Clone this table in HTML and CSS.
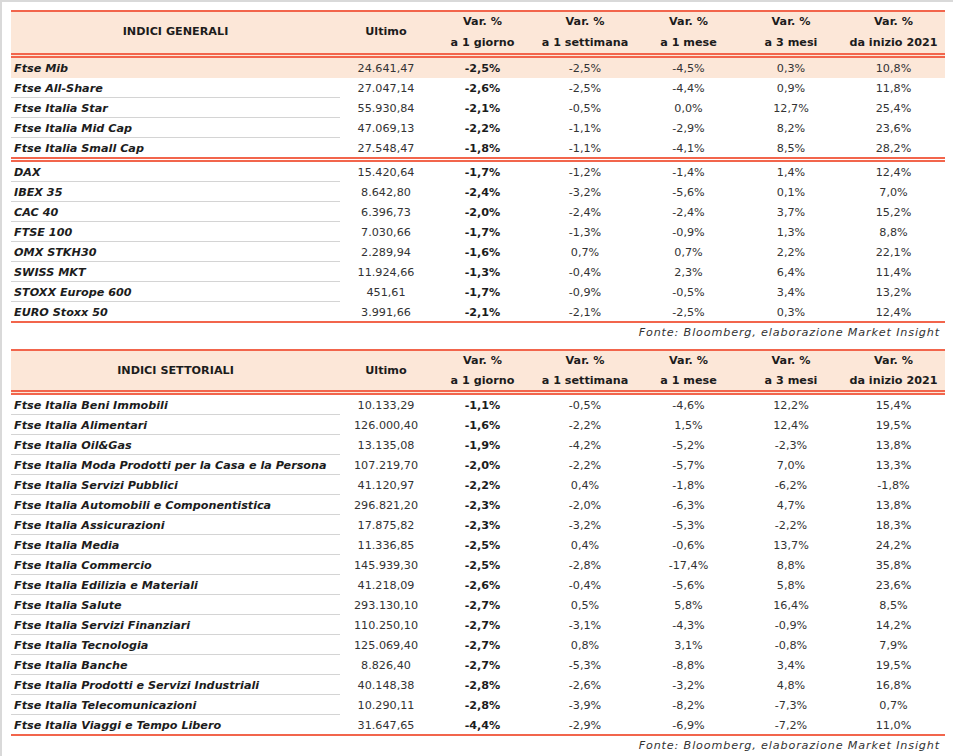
FILE: index.html
```html
<!DOCTYPE html>
<html lang="it">
<head>
<meta charset="utf-8">
<title>Indici</title>
<link rel="stylesheet" href="styles.css">
</head>
<body>
<div class="frame">
  <table class="tbl">
    <colgroup>
      <col class="c1"><col class="c2"><col class="c3"><col class="c4"><col class="c5"><col class="c6"><col class="c7">
    </colgroup>
    <thead>
      <tr>
        <th>INDICI GENERALI</th>
        <th>Ultimo</th>
        <th>Var. %<br>a 1 giorno</th>
        <th>Var. %<br>a 1 settimana</th>
        <th>Var. %<br>a 1 mese</th>
        <th>Var. %<br>a 3 mesi</th>
        <th>Var. %<br>da inizio 2021</th>
      </tr>
    </thead>
    <tbody>
      <tr class="hl nosep"><td class="name">Ftse Mib</td><td>24.641,47</td><td class="b">-2,5%</td><td>-2,5%</td><td>-4,5%</td><td>0,3%</td><td>10,8%</td></tr>
      <tr><td class="name">Ftse All-Share</td><td>27.047,14</td><td class="b">-2,6%</td><td>-2,5%</td><td>-4,4%</td><td>0,9%</td><td>11,8%</td></tr>
      <tr><td class="name">Ftse Italia Star</td><td>55.930,84</td><td class="b">-2,1%</td><td>-0,5%</td><td>0,0%</td><td>12,7%</td><td>25,4%</td></tr>
      <tr><td class="name">Ftse Italia Mid Cap</td><td>47.069,13</td><td class="b">-2,2%</td><td>-1,1%</td><td>-2,9%</td><td>8,2%</td><td>23,6%</td></tr>
      <tr class="dbl"><td class="name">Ftse Italia Small Cap</td><td>27.548,47</td><td class="b">-1,8%</td><td>-1,1%</td><td>-4,1%</td><td>8,5%</td><td>28,2%</td></tr>
      <tr><td class="name">DAX</td><td>15.420,64</td><td class="b">-1,7%</td><td>-1,2%</td><td>-1,4%</td><td>1,4%</td><td>12,4%</td></tr>
      <tr><td class="name">IBEX 35</td><td>8.642,80</td><td class="b">-2,4%</td><td>-3,2%</td><td>-5,6%</td><td>0,1%</td><td>7,0%</td></tr>
      <tr><td class="name">CAC 40</td><td>6.396,73</td><td class="b">-2,0%</td><td>-2,4%</td><td>-2,4%</td><td>3,7%</td><td>15,2%</td></tr>
      <tr><td class="name">FTSE 100</td><td>7.030,66</td><td class="b">-1,7%</td><td>-1,3%</td><td>-0,9%</td><td>1,3%</td><td>8,8%</td></tr>
      <tr><td class="name">OMX STKH30</td><td>2.289,94</td><td class="b">-1,6%</td><td>0,7%</td><td>0,7%</td><td>2,2%</td><td>22,1%</td></tr>
      <tr><td class="name">SWISS MKT</td><td>11.924,66</td><td class="b">-1,3%</td><td>-0,4%</td><td>2,3%</td><td>6,4%</td><td>11,4%</td></tr>
      <tr><td class="name">STOXX Europe 600</td><td>451,61</td><td class="b">-1,7%</td><td>-0,9%</td><td>-0,5%</td><td>3,4%</td><td>13,2%</td></tr>
      <tr class="last"><td class="name">EURO Stoxx 50</td><td>3.991,66</td><td class="b">-2,1%</td><td>-2,1%</td><td>-2,5%</td><td>0,3%</td><td>12,4%</td></tr>
    </tbody>
  </table>
  <p class="source">Fonte: Bloomberg, elaborazione Market Insight</p>

  <table class="tbl tbl-compact">
    <colgroup>
      <col class="c1"><col class="c2"><col class="c3"><col class="c4"><col class="c5"><col class="c6"><col class="c7">
    </colgroup>
    <thead>
      <tr>
        <th>INDICI SETTORIALI</th>
        <th>Ultimo</th>
        <th>Var. %<br>a 1 giorno</th>
        <th>Var. %<br>a 1 settimana</th>
        <th>Var. %<br>a 1 mese</th>
        <th>Var. %<br>a 3 mesi</th>
        <th>Var. %<br>da inizio 2021</th>
      </tr>
    </thead>
    <tbody>
      <tr><td class="name">Ftse Italia Beni Immobili</td><td>10.133,29</td><td class="b">-1,1%</td><td>-0,5%</td><td>-4,6%</td><td>12,2%</td><td>15,4%</td></tr>
      <tr><td class="name">Ftse Italia Alimentari</td><td>126.000,40</td><td class="b">-1,6%</td><td>-2,2%</td><td>1,5%</td><td>12,4%</td><td>19,5%</td></tr>
      <tr><td class="name">Ftse Italia Oil&amp;Gas</td><td>13.135,08</td><td class="b">-1,9%</td><td>-4,2%</td><td>-5,2%</td><td>-2,3%</td><td>13,8%</td></tr>
      <tr><td class="name">Ftse Italia Moda Prodotti per la Casa e la Persona</td><td>107.219,70</td><td class="b">-2,0%</td><td>-2,2%</td><td>-5,7%</td><td>7,0%</td><td>13,3%</td></tr>
      <tr><td class="name">Ftse Italia Servizi Pubblici</td><td>41.120,97</td><td class="b">-2,2%</td><td>0,4%</td><td>-1,8%</td><td>-6,2%</td><td>-1,8%</td></tr>
      <tr><td class="name">Ftse Italia Automobili e Componentistica</td><td>296.821,20</td><td class="b">-2,3%</td><td>-2,0%</td><td>-6,3%</td><td>4,7%</td><td>13,8%</td></tr>
      <tr><td class="name">Ftse Italia Assicurazioni</td><td>17.875,82</td><td class="b">-2,3%</td><td>-3,2%</td><td>-5,3%</td><td>-2,2%</td><td>18,3%</td></tr>
      <tr><td class="name">Ftse Italia Media</td><td>11.336,85</td><td class="b">-2,5%</td><td>0,4%</td><td>-0,6%</td><td>13,7%</td><td>24,2%</td></tr>
      <tr><td class="name">Ftse Italia Commercio</td><td>145.939,30</td><td class="b">-2,5%</td><td>-2,8%</td><td>-17,4%</td><td>8,8%</td><td>35,8%</td></tr>
      <tr><td class="name">Ftse Italia Edilizia e Materiali</td><td>41.218,09</td><td class="b">-2,6%</td><td>-0,4%</td><td>-5,6%</td><td>5,8%</td><td>23,6%</td></tr>
      <tr><td class="name">Ftse Italia Salute</td><td>293.130,10</td><td class="b">-2,7%</td><td>0,5%</td><td>5,8%</td><td>16,4%</td><td>8,5%</td></tr>
      <tr><td class="name">Ftse Italia Servizi Finanziari</td><td>110.250,10</td><td class="b">-2,7%</td><td>-3,1%</td><td>-4,3%</td><td>-0,9%</td><td>14,2%</td></tr>
      <tr><td class="name">Ftse Italia Tecnologia</td><td>125.069,40</td><td class="b">-2,7%</td><td>0,8%</td><td>3,1%</td><td>-0,8%</td><td>7,9%</td></tr>
      <tr><td class="name">Ftse Italia Banche</td><td>8.826,40</td><td class="b">-2,7%</td><td>-5,3%</td><td>-8,8%</td><td>3,4%</td><td>19,5%</td></tr>
      <tr><td class="name">Ftse Italia Prodotti e Servizi Industriali</td><td>40.148,38</td><td class="b">-2,8%</td><td>-2,6%</td><td>-3,2%</td><td>4,8%</td><td>16,8%</td></tr>
      <tr><td class="name">Ftse Italia Telecomunicazioni</td><td>10.290,11</td><td class="b">-2,8%</td><td>-3,9%</td><td>-8,2%</td><td>-7,3%</td><td>0,7%</td></tr>
      <tr class="last"><td class="name">Ftse Italia Viaggi e Tempo Libero</td><td>31.647,65</td><td class="b">-4,4%</td><td>-2,9%</td><td>-6,9%</td><td>-7,2%</td><td>11,0%</td></tr>
    </tbody>
  </table>
  <p class="source">Fonte: Bloomberg, elaborazione Market Insight</p>
</div>
</body>
</html>
```
FILE: styles.css
```css
html, body {
  margin: 0;
  padding: 0;
  background: #ffffff;
}

body {
  font-family: "DejaVu Sans", "Liberation Sans", sans-serif;
  font-size: 11.2px;
  color: #333333;
}

.frame {
  border-top: 2px solid #d9d9d9;
  border-left: 2px solid #d9d9d9;
  padding: 8px 0 0 9px;
  min-height: 754px;
  box-sizing: border-box;
}

.tbl {
  width: 934px;
  table-layout: fixed;
  border-collapse: separate;
  border-spacing: 0;
}

.c1 { width: 329px; }
.c2 { width: 92px; }
.c3 { width: 101px; }
.c4 { width: 104px; }
.c5 { width: 103px; }
.c6 { width: 102px; }
.c7 { width: 103px; }

.tbl th {
  background: #fce7d8;
  border-top: 2px solid #f2654c;
  border-bottom: 5px double #f2654c;
  font-weight: bold;
  color: #1c1c1c;
  line-height: 20.5px;
  padding: 0;
  text-align: center;
  vertical-align: middle;
  white-space: nowrap;
}

.tbl-compact th {
  line-height: 19.5px;
}

.tbl td {
  padding: 2px 0 0 0;
  height: 17px;
  line-height: 17px;
  text-align: center;
  vertical-align: middle;
  white-space: nowrap;
  border-bottom: 1px solid transparent;
}

.tbl td.name {
  text-align: left;
  padding-left: 3px;
  font-weight: bold;
  font-style: italic;
  color: #1c1c1c;
  border-bottom-color: #d4d4d4;
}

.tbl td.b {
  font-weight: bold;
  color: #1c1c1c;
}

.tbl tr.hl td {
  background: #fce7d8;
}

.tbl tr.nosep td.name {
  border-bottom-color: transparent;
}

.tbl tr.dbl td,
.tbl tr.dbl td.name {
  border-bottom: 5px double #f2654c;
}

.tbl tr.last td,
.tbl tr.last td.name {
  border-bottom: 2px solid #f2654c;
}

.source {
  margin: 0 0 6px 0;
  width: 934px;
  box-sizing: border-box;
  padding-right: 5px;
  text-align: right;
  font-style: italic;
  letter-spacing: 0.85px;
  line-height: 20px;
  color: #333333;
}
```
